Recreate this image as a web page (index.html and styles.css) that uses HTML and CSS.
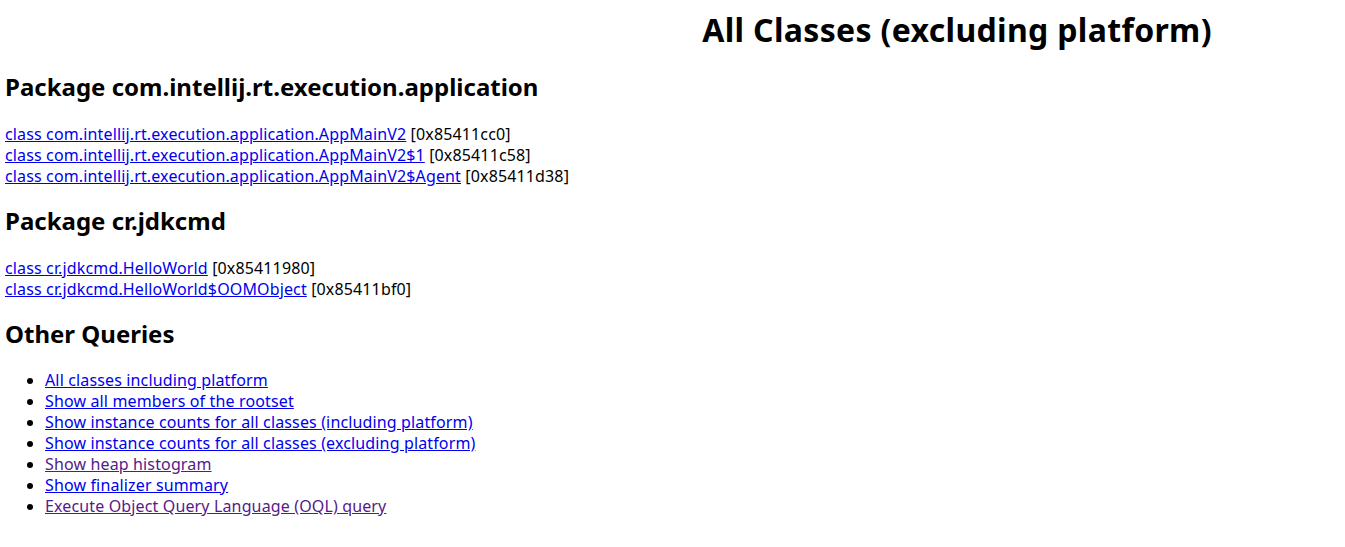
FILE: index.html
```html
<!DOCTYPE html>
<html>
<head>
<meta charset="utf-8">
<title>All Classes (excluding platform)</title>
<link rel="stylesheet" href="styles.css">
</head>
<body>
<h1 class="title">All Classes (excluding platform)</h1>

<h2 class="pkg">Package com.intellij.rt.execution.application</h2>
<div class="classes">
<a href="#c1">class com.intellij.rt.execution.application.AppMainV2</a> [0x85411cc0]<br>
<a href="#c2">class com.intellij.rt.execution.application.AppMainV2$1</a> [0x85411c58]<br>
<a href="#c3">class com.intellij.rt.execution.application.AppMainV2$Agent</a> [0x85411d38]<br>
</div>

<h2 class="pkg">Package cr.jdkcmd</h2>
<div class="classes">
<a href="#c4">class cr.jdkcmd.HelloWorld</a> [0x85411980]<br>
<a href="#c5">class cr.jdkcmd.HelloWorld$OOMObject</a> [0x85411bf0]<br>
</div>

<h2 class="pkg">Other Queries</h2>
<ul class="queries">
<li><a href="#q1">All classes including platform</a></li>
<li><a href="#q2">Show all members of the rootset</a></li>
<li><a href="#q3">Show instance counts for all classes (including platform)</a></li>
<li><a href="#q4">Show instance counts for all classes (excluding platform)</a></li>
<li><a class="visited" href="#q5">Show heap histogram</a></li>
<li><a href="#q6">Show finalizer summary</a></li>
<li><a class="visited" href="#q7">Execute Object Query Language (OQL) query</a></li>
</ul>
</body>
</html>
```
FILE: styles.css
```css
html {
  background: #fff;
}
body {
  margin: 9px 0 0 5px;
  font-family: "Noto Sans", "Open Sans", sans-serif;
  font-size: 16px;
  line-height: 21px;
  letter-spacing: 0.14px;
  color: #000;
}
a {
  color: #0000ee;
  text-decoration: underline;
}
a.visited {
  color: #551a8b;
}
.title {
  margin: 0 0 20px 564px;
  font-size: 32px;
  line-height: 42px;
  font-weight: bold;
  letter-spacing: 0.33px;
  text-align: center;
}
.pkg {
  margin: 18px 0 19px 0;
  font-size: 24px;
  line-height: 32px;
  font-weight: bold;
  letter-spacing: 0;
}
.classes {
  margin: 0;
  padding-top: 2px;
}
.queries {
  margin: 20px 0 16px 0;
  padding-left: 40px;
}
```
